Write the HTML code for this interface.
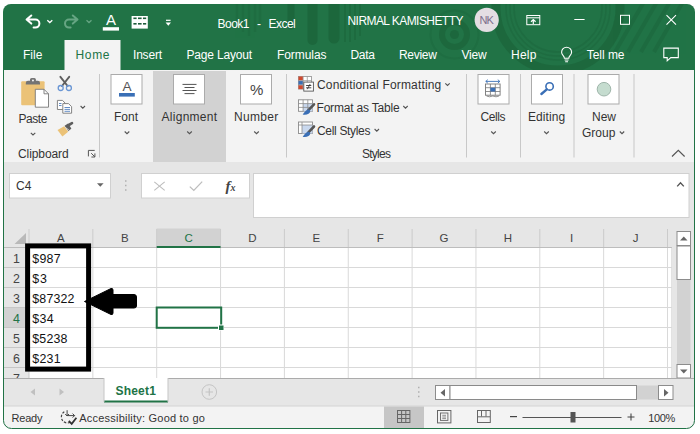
<!DOCTYPE html>
<html><head><meta charset="utf-8"><title>Book1 - Excel</title>
<style>
html,body{margin:0;padding:0;}
body{width:700px;height:434px;background:#fff;position:relative;overflow:hidden;font-family:"Liberation Sans", sans-serif;}
.t{position:absolute;white-space:nowrap;line-height:16px;font-family:"Liberation Sans", sans-serif;}
.a{position:absolute;}
svg{position:absolute;overflow:visible;}
</style></head><body>
<svg width="700" height="434" viewBox="0 0 700 434" style="left:0;top:0">
<defs><clipPath id="wc"><rect x="3" y="4" width="692" height="424.5" rx="8" ry="8"/></clipPath><clipPath id="tc"><rect x="3" y="4" width="692" height="66"/></clipPath></defs>
<g clip-path="url(#wc)">
<rect x="3" y="4" width="692" height="425" fill="#e6e6e6"/>
<rect x="3" y="4" width="692" height="66" fill="#217346"/>
<g clip-path="url(#tc)" fill="none" stroke="#1c663c">
<g stroke-width="2.5" opacity="0.45"><line x1="237" y1="4" x2="237" y2="28"/><line x1="243" y1="4" x2="243" y2="32"/><line x1="249" y1="4" x2="249" y2="36"/><line x1="255" y1="4" x2="255" y2="32"/><line x1="260" y1="4" x2="260" y2="26"/></g>
<g stroke-linecap="round" opacity="0.9"><line x1="291" y1="0" x2="291" y2="26" stroke-width="7"/><line x1="312.5" y1="0" x2="312.5" y2="40" stroke-width="10"/><line x1="334" y1="0" x2="334" y2="38" stroke-width="11"/></g>
<g stroke-width="2" opacity="0.6"><line x1="345" y1="4" x2="345" y2="42"/><line x1="350" y1="4" x2="350" y2="42"/><line x1="355" y1="4" x2="355" y2="40"/><line x1="360" y1="4" x2="360" y2="36"/></g>
<circle cx="454.5" cy="34.5" r="4.5" fill="#1c663c" stroke="none" opacity="0.9"/><circle cx="454.5" cy="34.5" r="12.5" stroke-width="6" opacity="0.85"/><circle cx="454.5" cy="34.5" r="24" stroke-width="2" opacity="0.4"/>
<circle cx="558" cy="8" r="62" stroke-width="9" opacity="0.85"/><circle cx="558" cy="8" r="52" stroke-width="1.5" opacity="0.5"/><circle cx="558" cy="8" r="48" stroke-width="1.5" opacity="0.5"/><circle cx="558" cy="8" r="44" stroke-width="1.5" opacity="0.5"/>
<g stroke-width="4" opacity="0.6"><line x1="645" y1="0" x2="615" y2="52"/><line x1="658" y1="0" x2="628" y2="52"/><line x1="671" y1="0" x2="641" y2="52"/><line x1="684" y1="0" x2="654" y2="52"/></g>
</g>
<rect x="64.5" y="40" width="56" height="31" fill="#f3f3f3"/>
<rect x="3" y="70" width="692" height="92" fill="#f3f3f3"/>
<rect x="153" y="71" width="73" height="91" fill="#d2d2d2"/>
<rect x="99.0" y="74" width="1" height="83.5" fill="#c8c8c8"/>
<rect x="286.0" y="74" width="1" height="83.5" fill="#c8c8c8"/>
<rect x="466.0" y="74" width="1" height="83.5" fill="#c8c8c8"/>
<rect x="520.0" y="74" width="1" height="83.5" fill="#c8c8c8"/>
<rect x="573.5" y="74" width="1" height="83.5" fill="#c8c8c8"/>
<rect x="633.5" y="74" width="1" height="83.5" fill="#c8c8c8"/>
<rect x="111" y="74.5" width="31" height="29.5" fill="#fff" stroke="#ababab" stroke-width="1"/>
<rect x="173.5" y="74.5" width="31" height="29.5" fill="#fff" stroke="#ababab" stroke-width="1"/>
<rect x="240.5" y="74.5" width="31" height="29.5" fill="#fff" stroke="#ababab" stroke-width="1"/>
<rect x="478" y="74.5" width="31" height="29.5" fill="#fff" stroke="#ababab" stroke-width="1"/>
<rect x="531.5" y="74.5" width="31" height="29.5" fill="#fff" stroke="#ababab" stroke-width="1"/>
<rect x="588" y="74.5" width="31" height="29.5" fill="#fff" stroke="#ababab" stroke-width="1"/>
<rect x="9.5" y="173.5" width="101" height="24.5" fill="#fff" stroke="#d0d0d0"/>
<rect x="141.5" y="173.5" width="108" height="24.5" fill="#fff" stroke="#d0d0d0"/>
<rect x="253.5" y="173.5" width="435.5" height="44" fill="#fff" stroke="#d0d0d0"/>
<rect x="4" y="228" width="668" height="150" fill="#e6e6e6"/>
<rect x="29" y="247.5" width="643" height="131" fill="#fff"/>
<rect x="156.70" y="228.5" width="63.85" height="19" fill="#d2d2d2"/>
<rect x="4" y="307.5" width="25" height="20" fill="#d2d2d2"/>
<rect x="28.50" y="229" width="1" height="19" fill="#cbcbcb"/>
<rect x="92.35" y="229" width="1" height="19" fill="#cbcbcb"/>
<rect x="156.20" y="229" width="1" height="19" fill="#cbcbcb"/>
<rect x="220.05" y="229" width="1" height="19" fill="#cbcbcb"/>
<rect x="283.90" y="229" width="1" height="19" fill="#cbcbcb"/>
<rect x="347.75" y="229" width="1" height="19" fill="#cbcbcb"/>
<rect x="411.60" y="229" width="1" height="19" fill="#cbcbcb"/>
<rect x="475.45" y="229" width="1" height="19" fill="#cbcbcb"/>
<rect x="539.30" y="229" width="1" height="19" fill="#cbcbcb"/>
<rect x="603.15" y="229" width="1" height="19" fill="#cbcbcb"/>
<rect x="667.00" y="229" width="1" height="19" fill="#cbcbcb"/>
<rect x="4" y="247" width="668" height="1" fill="#bdbdbd"/>
<rect x="156.70" y="246" width="63.85" height="2" fill="#217346"/>
<rect x="92.35" y="248" width="1" height="130" fill="#d9d9d9"/>
<rect x="156.20" y="248" width="1" height="130" fill="#d9d9d9"/>
<rect x="220.05" y="248" width="1" height="130" fill="#d9d9d9"/>
<rect x="283.90" y="248" width="1" height="130" fill="#d9d9d9"/>
<rect x="347.75" y="248" width="1" height="130" fill="#d9d9d9"/>
<rect x="411.60" y="248" width="1" height="130" fill="#d9d9d9"/>
<rect x="475.45" y="248" width="1" height="130" fill="#d9d9d9"/>
<rect x="539.30" y="248" width="1" height="130" fill="#d9d9d9"/>
<rect x="603.15" y="248" width="1" height="130" fill="#d9d9d9"/>
<rect x="667.00" y="248" width="1" height="130" fill="#d9d9d9"/>
<rect x="28.5" y="248" width="1" height="130" fill="#c6c6c6"/>
<rect x="671.5" y="247" width="1" height="131" fill="#c6c6c6"/>
<rect x="29" y="267.0" width="643" height="1" fill="#d9d9d9"/>
<rect x="4" y="267.0" width="25" height="1" fill="#c6c6c6"/>
<rect x="29" y="287.0" width="643" height="1" fill="#d9d9d9"/>
<rect x="4" y="287.0" width="25" height="1" fill="#c6c6c6"/>
<rect x="29" y="307.0" width="643" height="1" fill="#d9d9d9"/>
<rect x="4" y="307.0" width="25" height="1" fill="#c6c6c6"/>
<rect x="29" y="327.0" width="643" height="1" fill="#d9d9d9"/>
<rect x="4" y="327.0" width="25" height="1" fill="#c6c6c6"/>
<rect x="29" y="347.0" width="643" height="1" fill="#d9d9d9"/>
<rect x="4" y="347.0" width="25" height="1" fill="#c6c6c6"/>
<rect x="29" y="367.0" width="643" height="1" fill="#d9d9d9"/>
<rect x="4" y="367.0" width="25" height="1" fill="#c6c6c6"/>
<path d="M26 233 L26 244 L14.5 244 Z" fill="#b9b9b9"/>
<rect x="156.7" y="307.5" width="64.5" height="20.3" fill="none" stroke="#217346" stroke-width="2"/>
<rect x="218" y="324.5" width="6" height="6" fill="#fff"/><rect x="219" y="325.5" width="4.5" height="4.5" fill="#217346"/>
<rect x="27.6" y="245.9" width="61" height="123.2" fill="none" stroke="#000" stroke-width="5"/>
<path d="M84.5 301.5 L111 288.5 Q113 288 113 290 L113 294.5 L134 294.5 Q136.5 294.5 136.5 297 L136.5 306 Q136.5 308 134 308 L113 308 L113 313 Q113 315 111 314.5 Z" fill="#000" stroke="#000" stroke-width="1" stroke-linejoin="round"/>
<rect x="672" y="228" width="23" height="150" fill="#e6e6e6"/>
<rect x="677" y="246" width="13.5" height="118" fill="#d2d2d2"/>
<rect x="677" y="231.5" width="13.5" height="14" fill="#fff" stroke="#8c8c8c"/>
<path d="M680 240.5 L687.5 240.5 L683.75 236.5 Z" fill="#666"/>
<rect x="677" y="246" width="13.5" height="33.5" fill="#fff" stroke="#8c8c8c"/>
<rect x="677" y="364.5" width="13.5" height="13.5" fill="#fff" stroke="#8c8c8c"/>
<path d="M680 369.5 L687.5 369.5 L683.75 373.5 Z" fill="#666"/>
<rect x="4" y="378" width="691" height="28" fill="#e6e6e6"/>
<rect x="4" y="378" width="691" height="1" fill="#ababab"/>
<rect x="104" y="378" width="64" height="24" fill="#fff"/>
<rect x="104" y="400.5" width="64" height="2" fill="#217346"/>
<rect x="103.5" y="378" width="1" height="24" fill="#c6c6c6"/><rect x="167.5" y="378" width="1" height="24" fill="#c6c6c6"/>
<path d="M35 388.5 L35 395.5 L30.5 392 Z" fill="#c0c0c0"/><path d="M59.5 388.5 L59.5 395.5 L64 392 Z" fill="#c0c0c0"/>
<circle cx="209.3" cy="392" r="7.3" fill="none" stroke="#c4c4c4" stroke-width="1"/><path d="M205.5 392 H213 M209.3 388.2 V395.8" stroke="#c4c4c4" stroke-width="1.2" fill="none"/>
<rect x="418" y="386.75" width="1.5" height="1.5" fill="#b0b0b0"/>
<rect x="418" y="391.25" width="1.5" height="1.5" fill="#b0b0b0"/>
<rect x="418" y="395.75" width="1.5" height="1.5" fill="#b0b0b0"/>
<rect x="125" y="180.25" width="1.5" height="1.5" fill="#b0b0b0"/>
<rect x="125" y="184.75" width="1.5" height="1.5" fill="#b0b0b0"/>
<rect x="125" y="189.25" width="1.5" height="1.5" fill="#b0b0b0"/>
<rect x="435.5" y="385.5" width="237.5" height="14" fill="#d2d2d2"/>
<rect x="435.5" y="385.5" width="14.5" height="14" fill="#fff" stroke="#8c8c8c"/>
<path d="M445 389 L445 396.5 L440.5 392.75 Z" fill="#666"/>
<rect x="450" y="385.5" width="186.5" height="14" fill="#fff" stroke="#8a8a8a"/>
<rect x="658.5" y="385.5" width="14.5" height="14" fill="#fff" stroke="#8c8c8c"/>
<path d="M664 389 L664 396.5 L668.5 392.75 Z" fill="#666"/>
<rect x="4" y="406" width="691" height="23" fill="#f3f3f3"/>
<rect x="4" y="405.5" width="691" height="1" fill="#d4d4d4"/>
<rect x="384" y="406.5" width="40" height="22" fill="#c6c6c6"/>
<rect x="510" y="416" width="7" height="1.2" fill="#444"/>
<rect x="522.5" y="417" width="99" height="1" fill="#555"/>
<rect x="570.5" y="412" width="5" height="10.5" fill="#555"/>
<path d="M627.5 417 H634.5 M631 413.5 V420.5" stroke="#444" stroke-width="1.1" fill="none"/>
</g>
<path d="M3.5 70 V420.5 a8 8 0 0 0 8 8 H686.5 a8 8 0 0 0 8 -8 V70" fill="none" stroke="#217346" stroke-width="1"/>
</svg>
<svg width="700" height="434" viewBox="0 0 700 434" style="left:0;top:0" fill="none">
<path d="M31.3 15.5 L26.6 19.6 L31.3 23.6 M27 19.6 H35.4 a4 4 0 0 1 0 8 H33.6" stroke="#fff" stroke-width="2" stroke-linecap="round" stroke-linejoin="round"/>
<path d="M47.3 20.2 L49.8 22.5 L52.3 20.2" stroke="#fff" stroke-width="1.3"/>
<path d="M72.8 15.5 L77.5 19.6 L72.8 23.6 M77 19.6 H69 a4 4 0 0 0 0 8 H70.6" stroke="#66a583" stroke-width="2" stroke-linecap="round" stroke-linejoin="round"/>
<path d="M86.5 20.2 L89 22.5 L91.5 20.2" stroke="#66a583" stroke-width="1.3"/>
<rect x="102.8" y="27.2" width="16.2" height="3.4" fill="#fff"/>
<rect x="131.6" y="16" width="16.2" height="12.6" fill="#fff"/>
<rect x="133.4" y="17.5" width="3.2" height="1.6" fill="#1d5c3a"/>
<rect x="138" y="17.5" width="3.6" height="1.6" fill="#1d5c3a"/>
<rect x="143" y="17.5" width="3.2" height="1.6" fill="#1d5c3a"/>
<rect x="133.4" y="23" width="3.2" height="1.6" fill="#1d5c3a"/>
<rect x="138" y="23" width="3.6" height="1.6" fill="#1d5c3a"/>
<rect x="143" y="23" width="3.2" height="1.6" fill="#1d5c3a"/>
<rect x="166" y="19.7" width="4.6" height="1.2" fill="#fff"/><path d="M165.6 22.6 H171 L168.3 25.8 Z" fill="#fff"/>
<circle cx="486.7" cy="19.9" r="12.1" fill="#e4dee3"/>
<rect x="526.8" y="15.5" width="13" height="9.2" stroke="#fff" stroke-width="1"/><path d="M526.8 17.8 H539.8" stroke="#fff" stroke-width="1"/><path d="M533.3 24 V20 M531 21.8 L533.3 19.6 L535.6 21.8" stroke="#fff" stroke-width="1.2"/>
<path d="M574.3 19.5 H584.6" stroke="#fff" stroke-width="1"/>
<rect x="620.5" y="15.3" width="9" height="9" stroke="#fff" stroke-width="1"/>
<path d="M666.5 15.2 L676 24.6 M676 15.2 L666.5 24.6" stroke="#fff" stroke-width="1.1"/>
<path d="M564.4 58.2 C564.4 56 561.6 55.2 561.6 52.2 A5 5 0 0 1 571.6 52.2 C571.6 55.2 568.8 56 568.8 58.2 Z" stroke="#fff" stroke-width="1.1"/><path d="M564.6 60 H568.6 M565.2 61.8 H568" stroke="#fff" stroke-width="1.1"/>
<path d="M663.8 48.1 H678.3 V57.6 H670.8 L667.2 60.8 V57.6 H663.8 Z" stroke="#fff" stroke-width="1.1" stroke-linejoin="miter"/>
<rect x="21.2" y="81.3" width="23.4" height="24" rx="1" fill="#ebc277"/>
<path d="M25.8 84.6 V83 a2.2 2.2 0 0 1 2.2 -2.2 H30 V79.6 a1.6 1.6 0 0 1 1.6 -1.6 H34.3 a1.6 1.6 0 0 1 1.6 1.6 V80.8 H37.8 a2.2 2.2 0 0 1 2.2 2.2 V84.6 Z" fill="#747474"/><circle cx="32.95" cy="80.4" r="1" fill="#f3f3f3"/>
<path d="M35.3 89.3 H44 L48.5 93.8 V107.2 H35.3 Z" fill="#fff" stroke="#777" stroke-width="0.9"/><path d="M44 89.3 V93.8 H48.5" stroke="#777" stroke-width="0.9"/>
<path d="M30.8 132.8 L33 135 L35.3 132.8" stroke="#555" stroke-width="1.1"/>
<path d="M60.4 76.8 L67.6 86 M69.2 76.8 L62 86" stroke="#5e5e5e" stroke-width="1.9" stroke-linecap="round"/>
<circle cx="60.7" cy="88" r="2.5" stroke="#6a96d4" stroke-width="1.3"/><circle cx="68.9" cy="88" r="2.5" stroke="#6a96d4" stroke-width="1.3"/>
<path d="M57.4 100.4 H62.5 L65 103 V109.5 H57.4 Z" fill="#fff" stroke="#777" stroke-width="0.9"/>
<path d="M62.8 103.6 H68.5 L71.6 106.6 V113.2 H62.8 Z" fill="#fff" stroke="#777" stroke-width="0.9"/>
<path d="M59 103.5 H61.5 M59 105.5 H61.5 M64.5 107.5 H70 M64.5 109.4 H70 M64.5 111.3 H70" stroke="#3a6fb6" stroke-width="0.8"/>
<path d="M80.6 106 L82.8 108.2 L85 106" stroke="#555" stroke-width="1.1"/>
<path d="M57.5 130 L64.2 126.2 L68.2 131.8 L62.4 136.4 Z" fill="#ebc277"/>
<path d="M64.6 125.8 L68 123.6 L71.4 128.6 L68.4 131.2 Z" fill="#5e5e5e"/><path d="M68.8 125 L72 123.2" stroke="#5e5e5e" stroke-width="2.6" stroke-linecap="round"/>
<path d="M65.6 127.6 L69.4 130.4" stroke="#f3f3f3" stroke-width="0.7"/>
<path d="M88.4 156.4 V150.4 H94.7 M91.2 153.2 L94.8 156.8 M94.9 153.4 V157 H91.4" stroke="#555" stroke-width="1"/>
<rect x="119" y="93" width="15.8" height="3.6" fill="#3a6fb6"/>
<rect x="182.5" y="83.9" width="14.0" height="1" fill="#555"/>
<rect x="184.5" y="87.0" width="10.0" height="1" fill="#555"/>
<rect x="182.5" y="90.0" width="14.0" height="1" fill="#555"/>
<rect x="184.5" y="93.1" width="10.0" height="1" fill="#555"/>
<path d="M124.7 131.5 L127 133.7 L129.3 131.5" stroke="#555" stroke-width="1.1"/>
<path d="M187.2 131.5 L189.5 133.7 L191.8 131.5" stroke="#555" stroke-width="1.1"/>
<path d="M254.2 131.5 L256.5 133.7 L258.8 131.5" stroke="#555" stroke-width="1.1"/>
<path d="M491.2 131.5 L493.5 133.7 L495.8 131.5" stroke="#555" stroke-width="1.1"/>
<path d="M544.2 131.5 L546.5 133.7 L548.8 131.5" stroke="#555" stroke-width="1.1"/>
<path d="M445.3 83.3 L447.5 85.5 L449.7 83.3" stroke="#555" stroke-width="1.1"/>
<path d="M403.3 106 L405.5 108.2 L407.7 106" stroke="#555" stroke-width="1.1"/>
<path d="M374.6 129 L376.8 131.2 L379.0 129" stroke="#555" stroke-width="1.1"/>
<path d="M619.8 131.5 L622 133.7 L624.2 131.5" stroke="#555" stroke-width="1.1"/>
<rect x="298.5" y="76.5" width="13" height="12.5" fill="#fff" stroke="#9a9a9a" stroke-width="0.9"/>
<rect x="298.5" y="76.5" width="4.6" height="4" fill="#d1492e"/><rect x="298.5" y="80.8" width="4.6" height="4" fill="#3a6fb6"/><rect x="298.5" y="85.1" width="4.6" height="4" fill="#d1492e"/>
<path d="M303.1 76.5 V89.0 M307.3 76.5 V89.0 M298.5 80.65 H311.5 M298.5 84.95 H311.5" stroke="#9a9a9a" stroke-width="0.8"/>
<rect x="303.8" y="82.1" width="9.6" height="9" fill="#fff" stroke="#555" stroke-width="0.9"/>
<path d="M306.1 85.5 H311.3 M306.1 87.8 H311.3 M310.1 84.1 L307.3 89.2" stroke="#333" stroke-width="0.9"/>
<rect x="298.5" y="99.8" width="14" height="11.5" fill="#fff" stroke="#8a8a8a" stroke-width="0.9"/>
<rect x="303.1" y="103.6" width="9.4" height="7.7" fill="#c9d8ee"/>
<path d="M303.1 99.8 V111.3 M307.8 99.8 V111.3 M298.5 103.6 H312.5 M298.5 107.39999999999999 H312.5" stroke="#8a8a8a" stroke-width="0.8"/>
<path d="M314.0 104.3 L308.0 110.6" stroke="#555" stroke-width="2.6" stroke-linecap="round"/>
<path d="M309.0 109.6 C306.5 109.3 305.0 111.8 302.7 114.6 C306.5 115.39999999999999 310.0 114.0 310.3 111.0 Z" fill="#3a6fb6"/>
<rect x="298.5" y="122" width="14" height="11.5" fill="#fff" stroke="#8a8a8a" stroke-width="0.9"/>
<rect x="302.0" y="125" width="10.5" height="8.5" fill="#c9d8ee"/>
<path d="M302.0 122 V133.5 M298.5 125 H312.5" stroke="#8a8a8a" stroke-width="0.8"/>
<path d="M314.0 126.5 L308.0 132.8" stroke="#555" stroke-width="2.6" stroke-linecap="round"/>
<path d="M309.0 131.8 C306.5 131.5 305.0 134 302.7 136.8 C306.5 137.6 310.0 136.2 310.3 133.2 Z" fill="#3a6fb6"/>
<rect x="485.5" y="84" width="14.6" height="11.2" fill="#fff" stroke="#777" stroke-width="0.9"/>
<path d="M490.4 84 V95.2 M495.3 84 V95.2 M485.5 87.7 H500.1 M485.5 91.5 H500.1" stroke="#777" stroke-width="0.8"/>
<rect x="490.4" y="87.7" width="4.9" height="3.8" fill="#3a6fb6"/>
<path d="M485.8 81.4 H499.8 M487.8 79.7 L485.8 81.4 L487.8 83.1 M497.8 79.7 L499.8 81.4 L497.8 83.1" stroke="#3a6fb6" stroke-width="0.9"/>
<path d="M486.5 96 q3 1.6 6.3 0 q3.3 1.6 6.3 0" stroke="#777" stroke-width="0.8"/>
<circle cx="549.6" cy="86.4" r="3.7" stroke="#3a6fb6" stroke-width="1.6" fill="#fff"/><path d="M546.8 89.3 L541.4 94" stroke="#3a6fb6" stroke-width="2.4" stroke-linecap="round"/>
<circle cx="604" cy="89.2" r="6.8" fill="#c5dccf" stroke="#9fb5aa" stroke-width="1"/>
<path d="M672 156.5 L678.3 150.3 L684.6 156.5" stroke="#555" stroke-width="1.2"/>
<path d="M97 183.2 H103.6 L100.3 186.8 Z" fill="#666"/>
<path d="M154.3 181.8 L164.7 190.4 M164.7 181.8 L154.3 190.4" stroke="#bdbdbd" stroke-width="1.1"/>
<path d="M189.8 186.6 L193.8 190.4 L202.2 181.6" stroke="#bdbdbd" stroke-width="1.3"/>
<path d="M677.2 186.4 L680.5 182.8 L683.8 186.4" stroke="#555" stroke-width="1.4"/>
<path d="M64.3 411.8 A6 6 0 1 0 70.5 422.1" stroke="#444" stroke-width="1.2" stroke-dasharray="2.4 1.5"/>
<path d="M67.1 410.2 V416 M65.2 414 L67.1 416 L69 414 M67.1 415.6 H74.6 M72.6 413.6 L74.6 415.6 L72.6 417.6" stroke="#444" stroke-width="1"/>
<path d="M68.8 420.9 L71.7 423.8 L76.4 417.8" stroke="#333" stroke-width="1.8"/>
<rect x="397.5" y="410.5" width="12.4" height="12" stroke="#666" stroke-width="1"/><path d="M401.6 410.5 V422.5 M405.8 410.5 V422.5 M397.5 414.5 H410 M397.5 418.5 H410" stroke="#666" stroke-width="1"/>
<rect x="437.5" y="410.5" width="13.4" height="12.4" stroke="#666" stroke-width="1"/><rect x="440.5" y="413" width="7.4" height="7.4" stroke="#666" stroke-width="0.9"/><path d="M442.3 415.3 H446 M442.3 417 H446 M442.3 418.6 H446" stroke="#666" stroke-width="0.7"/>
<rect x="477.5" y="410.5" width="12.8" height="12" stroke="#666" stroke-width="1"/><path d="M481.5 410.5 V416.5 M486 410.5 V416.5 M477.5 416.8 H490" stroke="#666" stroke-width="1"/>
</svg>
<span class="t" style="left:105.9px;top:12.2px;font-size:15px;color:#fff;line-height:16px;">A</span>
<span class="t" style="left:122.6px;top:79.3px;font-size:13.6px;color:#555;line-height:16px;">A</span>
<span class="t" style="left:225.5px;top:178.4px;font-size:15px;color:#444;font-weight:bold;line-height:16px;font-family:'Liberation Serif',serif;font-style:italic;">f<span style="font-size:10px;font-weight:bold;">x</span></span>
<span class="t" id="t0" style="left:217.50px;top:15.53px;font-size:12px;color:#fff;letter-spacing:-0.5px;word-spacing:5.1px;">Book1 - Excel</span>
<span class="t" id="t1" style="left:347.50px;top:13.03px;font-size:12px;color:#fff;letter-spacing:-0.562px;">NIRMAL KAMISHETTY</span>
<span class="t" id="t2" style="left:479.50px;top:12.06px;font-size:11px;color:#7d6f8c;letter-spacing:-0.900px;">NK</span>
<span class="t" id="t3" style="left:23.00px;top:46.53px;font-size:12px;color:#fff;">File</span>
<span class="t" id="t4" style="left:75.50px;top:46.53px;font-size:12px;color:#217346;letter-spacing:0.667px;">Home</span>
<span class="t" id="t5" style="left:133.00px;top:46.53px;font-size:12px;color:#fff;letter-spacing:-0.200px;">Insert</span>
<span class="t" id="t6" style="left:186.50px;top:46.53px;font-size:12px;color:#fff;letter-spacing:-0.175px;">Page Layout</span>
<span class="t" id="t7" style="left:277.00px;top:46.53px;font-size:12px;color:#fff;letter-spacing:-0.071px;">Formulas</span>
<span class="t" id="t8" style="left:350.50px;top:46.53px;font-size:12px;color:#fff;letter-spacing:-0.333px;">Data</span>
<span class="t" id="t9" style="left:399.00px;top:46.53px;font-size:12px;color:#fff;letter-spacing:-0.300px;">Review</span>
<span class="t" id="t10" style="left:461.50px;top:46.53px;font-size:12px;color:#fff;letter-spacing:-0.250px;">View</span>
<span class="t" id="t11" style="left:511.00px;top:46.53px;font-size:12px;color:#fff;letter-spacing:0.250px;">Help</span>
<span class="t" id="t12" style="left:586.75px;top:46.53px;font-size:12px;color:#fff;letter-spacing:-0.042px;">Tell me</span>
<span class="t" id="t13" style="left:18.50px;top:110.53px;font-size:12px;color:#333;letter-spacing:-0.438px;">Paste</span>
<span class="t" id="t14" style="left:18.00px;top:145.53px;font-size:12px;color:#333;letter-spacing:-0.094px;">Clipboard</span>
<span class="t" id="t15" style="left:114.00px;top:108.53px;font-size:12px;color:#333;">Font</span>
<span class="t" id="t16" style="left:161.50px;top:108.53px;font-size:12px;color:#333;letter-spacing:0.281px;">Alignment</span>
<span class="t" id="t17" style="left:234.00px;top:108.53px;font-size:12px;color:#333;letter-spacing:0.300px;">Number</span>
<span class="t" id="t18" style="left:250.00px;top:82.24px;font-size:15px;color:#444;">%</span>
<span class="t" id="t19" style="left:317.00px;top:77.03px;font-size:12px;color:#333;letter-spacing:0.167px;">Conditional Formatting</span>
<span class="t" id="t20" style="left:316.50px;top:99.53px;font-size:12px;color:#333;letter-spacing:-0.196px;">Format as Table</span>
<span class="t" id="t21" style="left:317.00px;top:122.53px;font-size:12px;color:#333;letter-spacing:-0.325px;">Cell Styles</span>
<span class="t" id="t22" style="left:362.00px;top:145.53px;font-size:12px;color:#333;letter-spacing:-0.750px;">Styles</span>
<span class="t" id="t23" style="left:480.50px;top:108.53px;font-size:12px;color:#333;letter-spacing:-0.438px;">Cells</span>
<span class="t" id="t24" style="left:528.00px;top:108.53px;font-size:12px;color:#333;letter-spacing:0.083px;">Editing</span>
<span class="t" id="t25" style="left:592.00px;top:108.53px;font-size:12px;color:#333;">New</span>
<span class="t" id="t26" style="left:582.00px;top:124.53px;font-size:12px;color:#333;">Group</span>
<span class="t" id="t27" style="left:16.00px;top:178.03px;font-size:12px;color:#333;">C4</span>
<span class="t" id="t28" style="left:115.50px;top:383.03px;font-size:12px;color:#217346;font-weight:bold;letter-spacing:0.200px;">Sheet1</span>
<span class="t" id="t29" style="left:11.50px;top:409.76px;font-size:11px;color:#333;letter-spacing:-0.188px;">Ready</span>
<span class="t" id="t30" style="left:79.20px;top:409.76px;font-size:11px;color:#333;letter-spacing:0.221px;">Accessibility: Good to go</span>
<span class="t" id="t31" style="left:648.25px;top:409.76px;font-size:11px;color:#333;letter-spacing:-0.333px;">100%</span>
<span class="t" id="t32" style="left:46.92px;width:28.00px;text-align:center;top:230.20px;font-size:11.5px;color:#444;">A</span>
<span class="t" id="t33" style="left:110.77px;width:28.00px;text-align:center;top:230.20px;font-size:11.5px;color:#444;">B</span>
<span class="t" id="t34" style="left:174.62px;width:28.00px;text-align:center;top:230.20px;font-size:11.5px;color:#217346;">C</span>
<span class="t" id="t35" style="left:238.47px;width:28.00px;text-align:center;top:230.20px;font-size:11.5px;color:#444;">D</span>
<span class="t" id="t36" style="left:302.32px;width:28.00px;text-align:center;top:230.20px;font-size:11.5px;color:#444;">E</span>
<span class="t" id="t37" style="left:366.18px;width:28.00px;text-align:center;top:230.20px;font-size:11.5px;color:#444;">F</span>
<span class="t" id="t38" style="left:430.02px;width:28.00px;text-align:center;top:230.20px;font-size:11.5px;color:#444;">G</span>
<span class="t" id="t39" style="left:493.88px;width:28.00px;text-align:center;top:230.20px;font-size:11.5px;color:#444;">H</span>
<span class="t" id="t40" style="left:557.72px;width:28.00px;text-align:center;top:230.20px;font-size:11.5px;color:#444;">I</span>
<span class="t" id="t41" style="left:621.58px;width:28.00px;text-align:center;top:230.20px;font-size:11.5px;color:#444;">J</span>
<span class="t" id="t42" style="left:2.50px;width:28.00px;text-align:center;top:250.90px;font-size:12.4px;color:#444;">1</span>
<span class="t" id="t43" style="left:2.50px;width:28.00px;text-align:center;top:270.85px;font-size:12.4px;color:#444;">2</span>
<span class="t" id="t44" style="left:2.50px;width:28.00px;text-align:center;top:290.80px;font-size:12.4px;color:#444;">3</span>
<span class="t" id="t45" style="left:2.50px;width:28.00px;text-align:center;top:310.75px;font-size:12.4px;color:#217346;">4</span>
<span class="t" id="t46" style="left:2.50px;width:28.00px;text-align:center;top:330.70px;font-size:12.4px;color:#444;">5</span>
<span class="t" id="t47" style="left:2.50px;width:28.00px;text-align:center;top:350.65px;font-size:12.4px;color:#444;">6</span>
<span class="t" id="t48" style="left:2.50px;width:28.00px;text-align:center;top:370.60px;font-size:12.4px;color:#444;clip-path:inset(0 0 8.60px 0);">7</span>
<span class="t" id="t49" style="left:32.25px;top:250.90px;font-size:12.4px;color:#111;letter-spacing:0.283px;">$987</span>
<span class="t" id="t50" style="left:32.25px;top:270.85px;font-size:12.4px;color:#111;letter-spacing:0.800px;">$3</span>
<span class="t" id="t51" style="left:32.25px;top:290.80px;font-size:12.4px;color:#111;letter-spacing:0.180px;">$87322</span>
<span class="t" id="t52" style="left:32.25px;top:310.75px;font-size:12.4px;color:#111;letter-spacing:0.350px;">$34</span>
<span class="t" id="t53" style="left:32.25px;top:330.70px;font-size:12.4px;color:#111;letter-spacing:0.188px;">$5238</span>
<span class="t" id="t54" style="left:32.25px;top:350.65px;font-size:12.4px;color:#111;letter-spacing:0.283px;">$231</span>
</body></html>
